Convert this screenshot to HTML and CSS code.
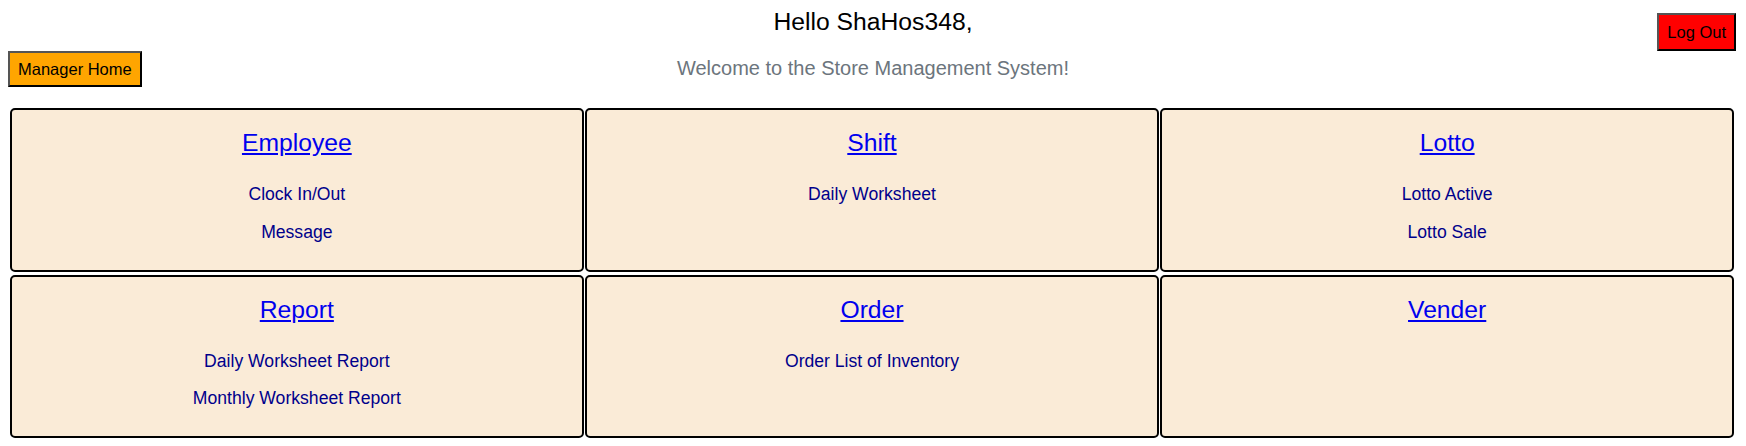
FILE: index.html
```html
<!DOCTYPE html>
<html lang="en">
<head>
<meta charset="utf-8">
<title>Store Management System</title>
<link rel="stylesheet" href="styles.css">
</head>
<body>
<header class="top">
  <div class="top-row">
    <div class="spacer"></div>
    <h1 class="hello">Hello ShaHos348,</h1>
    <div class="right"><button class="btn btn-logout">Log Out</button></div>
  </div>
  <div class="sub-row">
    <div class="left"><button class="btn btn-home">Manager Home</button></div>
    <p class="welcome">Welcome to the Store Management System!</p>
    <div class="spacer"></div>
  </div>
</header>
<main class="cards">
  <section class="card">
    <a class="card-title" href="#">Employee</a>
    <a class="card-item" href="#">Clock In/Out</a>
    <a class="card-item" href="#">Message</a>
  </section>
  <section class="card">
    <a class="card-title" href="#">Shift</a>
    <a class="card-item" href="#">Daily Worksheet</a>
  </section>
  <section class="card">
    <a class="card-title" href="#">Lotto</a>
    <a class="card-item" href="#">Lotto Active</a>
    <a class="card-item" href="#">Lotto Sale</a>
  </section>
  <section class="card">
    <a class="card-title" href="#">Report</a>
    <a class="card-item" href="#">Daily Worksheet Report</a>
    <a class="card-item" href="#">Monthly Worksheet Report</a>
  </section>
  <section class="card">
    <a class="card-title" href="#">Order</a>
    <a class="card-item" href="#">Order List of Inventory</a>
  </section>
  <section class="card">
    <a class="card-title" href="#">Vender</a>
  </section>
</main>
</body>
</html>
```
FILE: styles.css
```css
* {
  box-sizing: border-box;
}

body {
  margin: 8px;
  font-family: "Liberation Sans", Arial, Helvetica, sans-serif;
  background: #ffffff;
  color: #000000;
}

.top-row,
.sub-row {
  display: grid;
  grid-template-columns: 1fr auto 1fr;
  align-items: start;
}

.hello {
  margin: 0;
  font-size: 24.7px;
  font-weight: normal;
  line-height: normal;
  text-align: center;
}

.right {
  display: flex;
  justify-content: flex-end;
}

.left {
  display: flex;
  justify-content: flex-start;
}

.btn {
  font-family: "Liberation Sans", Arial, Helvetica, sans-serif;
  font-size: 16.5px;
  line-height: normal;
  color: #000000;
  border: 2px solid;
  border-color: #555555 #000000 #000000 #555555;
  border-radius: 0;
  cursor: pointer;
}

.btn-logout {
  background: #ff0000;
  padding: 7.5px 8px;
  margin: 5px 2px 0 0;
}

.btn-home {
  background: #ffa500;
  padding: 6.5px 8px;
}

.welcome {
  margin: 5.5px 0 0;
  font-size: 20px;
  line-height: normal;
  color: #6c757d;
  text-align: center;
}

.cards {
  display: grid;
  grid-template-columns: repeat(3, 1fr);
  column-gap: 1.5px;
  row-gap: 3px;
  margin: 21px 4px 0 2px;
}

.card {
  display: flex;
  flex-direction: column;
  align-items: center;
  background: #faebd7;
  border: 2px solid #000000;
  border-radius: 5px;
  padding: 19px 10px 24px;
  min-height: 163.5px;
}

.card-title {
  font-size: 24.7px;
  line-height: normal;
  color: #0000ee;
  text-decoration: underline;
  margin-bottom: 27px;
}

.card-item {
  font-size: 17.6px;
  line-height: normal;
  color: #00008b;
  text-decoration: none;
}

.card-item + .card-item {
  margin-top: 16.5px;
}
```
